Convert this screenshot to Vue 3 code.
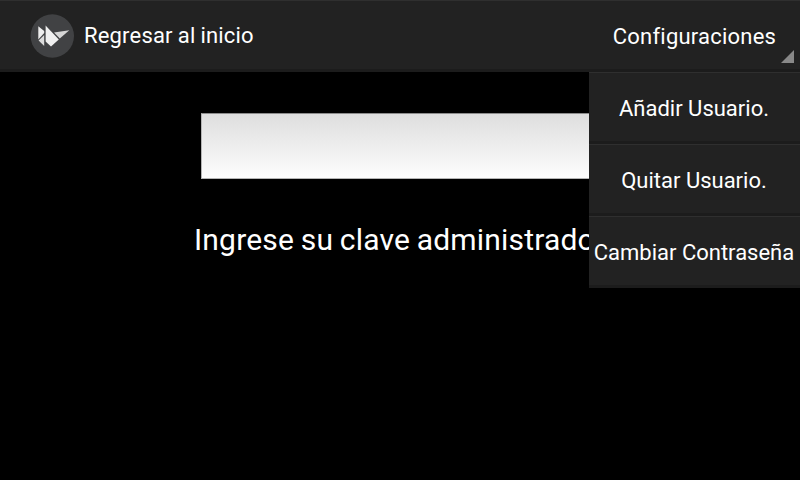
<script setup>
const options = ['Añadir Usuario.', 'Quitar Usuario.', 'Cambiar Contraseña']
</script>

<template>
  <div class="screen">
    <header class="bar">
      <div class="previous">
        <svg class="logo" width="44" height="44" viewBox="0 0 44 44">
          <circle cx="22.3" cy="22" r="21.7" fill="#414244" />
          <path d="M8.3 12.2L14.2 17V19L8.3 25.5Z" fill="#eeeeee" />
          <path d="M14.2 21V32L8.6 26.5Z" fill="#dcdcdc" />
          <path d="M15.6 11.5L28.8 25.5L21 32.4L15.6 27.5Z" fill="#f0f0f0" />
          <path d="M24 18.6L39.3 16.2L29.8 24.4Z" fill="#d6d6d6" />
        </svg>
        <span class="title">Regresar al inicio</span>
      </div>
      <button class="settings">
        <span>Configuraciones</span>
        <svg class="corner" width="13" height="13" viewBox="0 0 13 13">
          <path d="M13 0V13H0Z" fill="#888" />
        </svg>
      </button>
    </header>
    <main class="content">
      <div class="field"></div>
      <p class="hint">Ingrese su clave administrador</p>
    </main>
    <nav class="menu">
      <button v-for="option in options" :key="option" class="option"><span>{{ option }}</span></button>
    </nav>
  </div>
</template>

<style>
body { background: #000; }
</style>

<style scoped>
.screen {
  position: relative;
  width: 800px;
  height: 480px;
  overflow: hidden;
  background: #000;
  color: #fff;
  font-family: Roboto, sans-serif;
  font-size: 22px;
}
.bar, .option {
  box-sizing: border-box;
  height: 72px;
  background: linear-gradient(#2f2f2f 0 1px, #222 1px 69px, #1c1c1c 69px);
}
.bar { display: flex; justify-content: space-between; }
.previous { display: flex; align-items: center; gap: 10px; padding-left: 30px; }
.logo { display: block; }
.title { line-height: 26px; letter-spacing: 0.18px; word-spacing: -0.6px; }
button {
  border: 0;
  margin: 0;
  padding: 0;
  color: inherit;
  font: inherit;
  white-space: nowrap;
}
.settings {
  position: relative;
  width: 211px;
  background: none;
  letter-spacing: 0.22px;
}
.corner { position: absolute; right: 6px; bottom: 9px; }
.content { padding: 41px 0 0 201px; }
.field {
  box-sizing: border-box;
  width: 400px;
  height: 66px;
  border: 1px solid #b4b4b4;
  border-top-color: #8c8c8c;
  background: linear-gradient(#dedede, #fdfdfd);
}
.hint {
  margin: 43px 0 0 -7px;
  font-size: 30px;
  line-height: 36px;
  letter-spacing: 0.19px;
  word-spacing: -1px;
  white-space: nowrap;
}
.menu {
  position: absolute;
  top: 72px;
  right: 0;
  display: flex;
  flex-direction: column;
  width: 211px;
}
.option { padding-right: 1px; letter-spacing: 0; }
</style>
